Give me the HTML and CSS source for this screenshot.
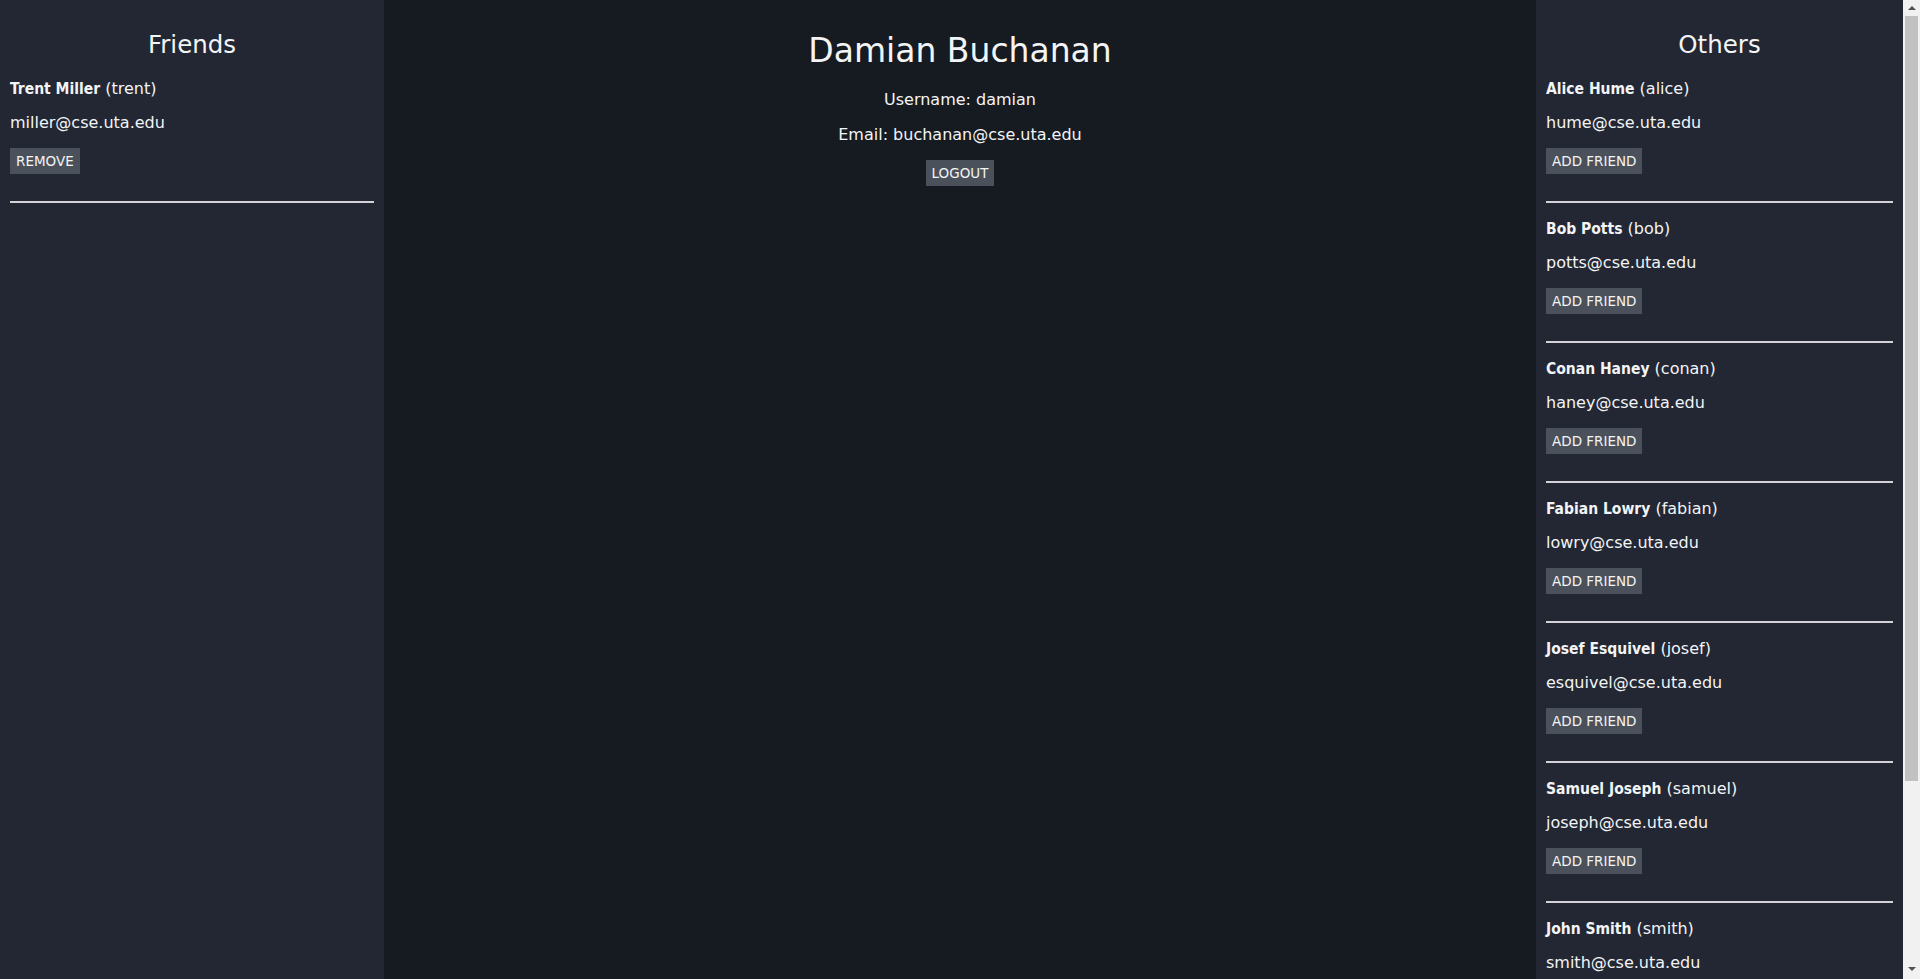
FILE: index.html
```html
<!DOCTYPE html>
<html lang="en">
<head>
<meta charset="utf-8">
<title>Damian Buchanan</title>
<link rel="stylesheet" href="styles.css">
</head>
<body>
<div class="layout">
  <aside class="panel">
    <h2 class="panel-title">Friends</h2>
    <div class="entry">
      <p class="entry-name"><strong>Trent Miller</strong> (trent)</p>
      <p class="entry-email">miller@cse.uta.edu</p>
      <button class="btn">REMOVE</button>
      <hr class="divider">
    </div>
  </aside>

  <main class="profile">
    <h1 class="profile-name">Damian Buchanan</h1>
    <p class="profile-line">Username: damian</p>
    <p class="profile-line">Email: buchanan@cse.uta.edu</p>
    <button class="btn">LOGOUT</button>
  </main>

  <aside class="panel">
    <h2 class="panel-title">Others</h2>
    <div class="entry">
      <p class="entry-name"><strong>Alice Hume</strong> (alice)</p>
      <p class="entry-email">hume@cse.uta.edu</p>
      <button class="btn">ADD FRIEND</button>
      <hr class="divider">
    </div>
    <div class="entry">
      <p class="entry-name"><strong>Bob Potts</strong> (bob)</p>
      <p class="entry-email">potts@cse.uta.edu</p>
      <button class="btn">ADD FRIEND</button>
      <hr class="divider">
    </div>
    <div class="entry">
      <p class="entry-name"><strong>Conan Haney</strong> (conan)</p>
      <p class="entry-email">haney@cse.uta.edu</p>
      <button class="btn">ADD FRIEND</button>
      <hr class="divider">
    </div>
    <div class="entry">
      <p class="entry-name"><strong>Fabian Lowry</strong> (fabian)</p>
      <p class="entry-email">lowry@cse.uta.edu</p>
      <button class="btn">ADD FRIEND</button>
      <hr class="divider">
    </div>
    <div class="entry">
      <p class="entry-name"><strong>Josef Esquivel</strong> (josef)</p>
      <p class="entry-email">esquivel@cse.uta.edu</p>
      <button class="btn">ADD FRIEND</button>
      <hr class="divider">
    </div>
    <div class="entry">
      <p class="entry-name"><strong>Samuel Joseph</strong> (samuel)</p>
      <p class="entry-email">joseph@cse.uta.edu</p>
      <button class="btn">ADD FRIEND</button>
      <hr class="divider">
    </div>
    <div class="entry">
      <p class="entry-name"><strong>John Smith</strong> (smith)</p>
      <p class="entry-email">smith@cse.uta.edu</p>
      <button class="btn">ADD FRIEND</button>
      <hr class="divider">
    </div>
  </aside>
</div>

<div class="scrollbar" aria-hidden="true">
  <span class="scroll-arrow scroll-arrow-up"></span>
  <span class="scroll-thumb"></span>
  <span class="scroll-arrow scroll-arrow-down"></span>
</div>
</body>
</html>
```
FILE: styles.css
```css
html {
  background: #161b22;
}

body {
  margin: 0;
  padding-right: 17px;
  background: #161b22;
  color: #f3f4f6;
  font-family: "DejaVu Sans", "Liberation Sans", sans-serif;
  font-size: 16px;
}

.layout {
  display: grid;
  grid-template-columns: 384px 1152px 1fr;
  min-height: 100vh;
}

.panel {
  background: #222733;
  padding: 10px;
}

.panel-title {
  margin: 20px 0;
  font-size: 24.5px;
  line-height: 29px;
  font-weight: normal;
  text-align: center;
}

.entry {
  display: flex;
  flex-direction: column;
  align-items: flex-start;
}

.entry-name,
.entry-email {
  margin: 0;
  line-height: 20px;
  white-space: nowrap;
}

.entry-name {
  margin-bottom: 14px;
}

.entry-email {
  margin-bottom: 15px;
}

.entry-name strong {
  font-weight: bold;
  font-size: 15.5px;
  font-stretch: semi-condensed;
}

.btn {
  height: 26px;
  padding: 0 6px;
  border: none;
  background: #4b515a;
  color: #f3f4f6;
  font-family: inherit;
  font-size: 13.5px;
  line-height: 26px;
}

.divider {
  align-self: stretch;
  margin: 27px 0 16px;
  border: none;
  height: 2px;
  background: #d4d4d6;
}

.profile {
  padding: 10px;
  display: flex;
  flex-direction: column;
  align-items: center;
}

.profile-name {
  margin: 21px 0 20px;
  font-size: 33px;
  line-height: 39px;
  font-weight: normal;
}

.profile-line {
  margin: 0 0 15px;
  line-height: 20px;
}

/* decorative page scrollbar (the reference shows the browser's) */
.scrollbar {
  position: fixed;
  top: 0;
  right: 0;
  width: 17px;
  height: 100vh;
  background: #f1f1f1;
}

.scroll-thumb {
  position: absolute;
  top: 16px;
  left: 2px;
  width: 13px;
  height: 765px;
  background: #c1c1c1;
}

.scroll-arrow {
  position: absolute;
  left: 5px;
  width: 0;
  height: 0;
  border-left: 4px solid transparent;
  border-right: 4px solid transparent;
}

.scroll-arrow-up {
  top: 6px;
  border-bottom: 4px solid #505050;
}

.scroll-arrow-down {
  bottom: 8px;
  border-top: 4px solid #505050;
}
```
